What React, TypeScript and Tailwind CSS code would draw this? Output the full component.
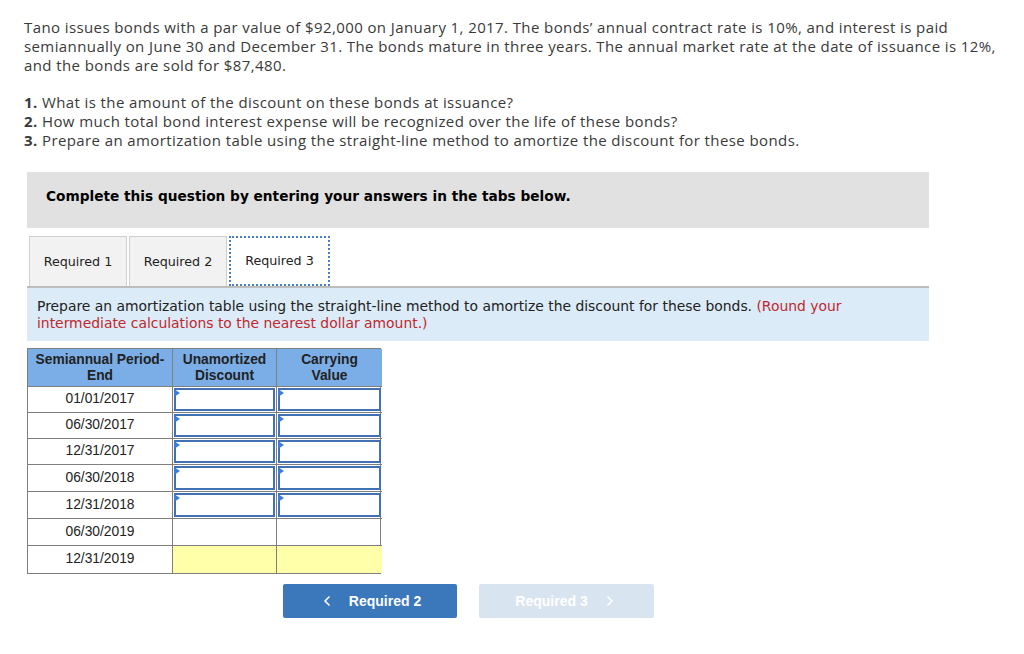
import { ChevronLeft, ChevronRight } from 'lucide-react'

const rows = [
  { date: '01/01/2017', input: true, h: 'h-[26px]' },
  { date: '06/30/2017', input: true, h: 'h-[26px]' },
  { date: '12/31/2017', input: true, h: 'h-[26px]' },
  { date: '06/30/2018', input: true, h: 'h-[27px]' },
  { date: '12/31/2018', input: true, h: 'h-[27px]' },
  { date: '06/30/2019', input: false, h: 'h-[27px]' },
  { date: '12/31/2019', input: false, total: true, h: 'h-[28px]' },
]

function InputCell() {
  return (
    <div className="relative h-full border-2 border-[#4171b2] bg-white">
      <span className="absolute -left-[2px] -top-[1px] w-0 h-0 border-y-[4px] border-y-transparent border-l-[6px] border-l-[#3b7ddd]" />
    </div>
  )
}

export default function App() {
  return (
    <div className="bg-white w-[1024px] h-[654px] text-[#222]">
      {/* Question text */}
      <div className="pl-6 pt-[18px] text-[15px] leading-[19px] tracking-[0.4px] text-[#3a3a3a]" style={{ fontFamily: '"Open Sans", Lato, sans-serif' }}>
        <p>
          Tano issues bonds with a par value of $92,000 on January 1, 2017. The bonds’ annual contract rate is 10%, and interest is paid
          <br />
          semiannually on June 30 and December 31. The bonds mature in three years. The annual market rate at the date of issuance is 12%,
          <br />
          and the bonds are sold for $87,480.
        </p>
        <div className="mt-[18px]">
          <p><b>1.</b> What is the amount of the discount on these bonds at issuance?</p>
          <p><b>2.</b> How much total bond interest expense will be recognized over the life of these bonds?</p>
          <p><b>3.</b> Prepare an amortization table using the straight-line method to amortize the discount for these bonds.</p>
        </div>
      </div>

      <div className="ml-[27px] w-[902px]" style={{ fontFamily: '"DejaVu Sans", Verdana, sans-serif' }}>
        {/* Instructions banner */}
        <div className="mt-[22px] h-[56px] bg-[#e1e1e1] flex items-center pl-[19px] pb-[8px]">
          <span className="text-[13.7px] font-bold text-black">Complete this question by entering your answers in the tabs below.</span>
        </div>

        {/* Tabs */}
        <div className="mt-2 flex gap-[2px] pl-[2px] h-[50px] text-[12.7px] text-[#222]">
          <div className="w-[98px] flex items-center justify-center bg-[#f2f2f2] border border-b-0 border-[#cfcfcf]">Required 1</div>
          <div className="w-[98px] flex items-center justify-center bg-[#f2f2f2] border border-b-0 border-[#cfcfcf]">Required 2</div>
          <div className="w-[101px] flex items-center justify-center bg-white border-2 border-dotted border-[#4a7fc8]">Required 3</div>
        </div>

        {/* Tab prompt */}
        <div className="border-t-2 border-[#bdbdbd] bg-[#dbebf8] h-[55px] pl-[10px] pt-[10px] text-[13.9px] leading-[17px] text-[#222]">
          Prepare an amortization table using the straight-line method to amortize the discount for these bonds.{' '}
          <span className="text-[#c1272d]">(Round your</span>
          <br />
          <span className="text-[#c1272d]">intermediate calculations to the nearest dollar amount.)</span>
        </div>
      </div>

      {/* Amortization table */}
      <div className="ml-[27px] mt-[7px] w-[354px] text-[13.8px] text-[#222]" style={{ fontFamily: '"Liberation Sans", Arial, sans-serif' }}>
        <div className="grid grid-cols-[145px_104px_105px] border border-[#7f7f7f]">
          <div className="h-[37px] bg-[#7baee6] flex items-center justify-center text-center font-bold leading-[16px] border-r border-[#7f7f7f]">Semiannual Period-<br />End</div>
          <div className="h-[37px] bg-[#7baee6] flex items-center justify-center text-center font-bold leading-[16px] border-r border-[#7f7f7f]">Unamortized<br />Discount</div>
          <div className="h-[37px] bg-[#7baee6] flex items-center justify-center text-center font-bold leading-[16px]">Carrying<br />Value</div>
          {rows.map((r) => (
            <div key={r.date} className="contents">
              <div className={`${r.h} flex items-center justify-center border-t border-r border-[#7f7f7f]`}>{r.date}</div>
              <div className={`${r.h} border-t border-r border-[#7f7f7f] ${r.input ? 'p-px' : ''} ${r.total ? 'bg-[#ffffa9]' : ''}`}>
                {r.input && <InputCell />}
              </div>
              <div className={`${r.h} border-t border-[#7f7f7f] ${r.input ? 'p-px' : ''} ${r.total ? 'bg-[#ffffa9]' : ''}`}>
                {r.input && <InputCell />}
              </div>
            </div>
          ))}
        </div>
      </div>

      {/* Navigation */}
      <div className="mt-[10px] ml-[283px] flex gap-[22px]" style={{ fontFamily: '"Liberation Sans", Arial, sans-serif' }}>
        <button className="w-[174px] h-[34px] bg-[#3a77bb] rounded-[2px] flex items-center justify-center gap-[14px] text-white font-bold text-[14px]">
          <ChevronLeft className="w-4 h-4" strokeWidth={2.5} />
          Required 2
        </button>
        <button className="w-[175px] h-[34px] bg-[#d9e4f1] rounded-[2px] flex items-center justify-center gap-[14px] text-white font-bold text-[14px]">
          Required 3
          <ChevronRight className="w-4 h-4" strokeWidth={2.5} />
        </button>
      </div>
    </div>
  )
}
